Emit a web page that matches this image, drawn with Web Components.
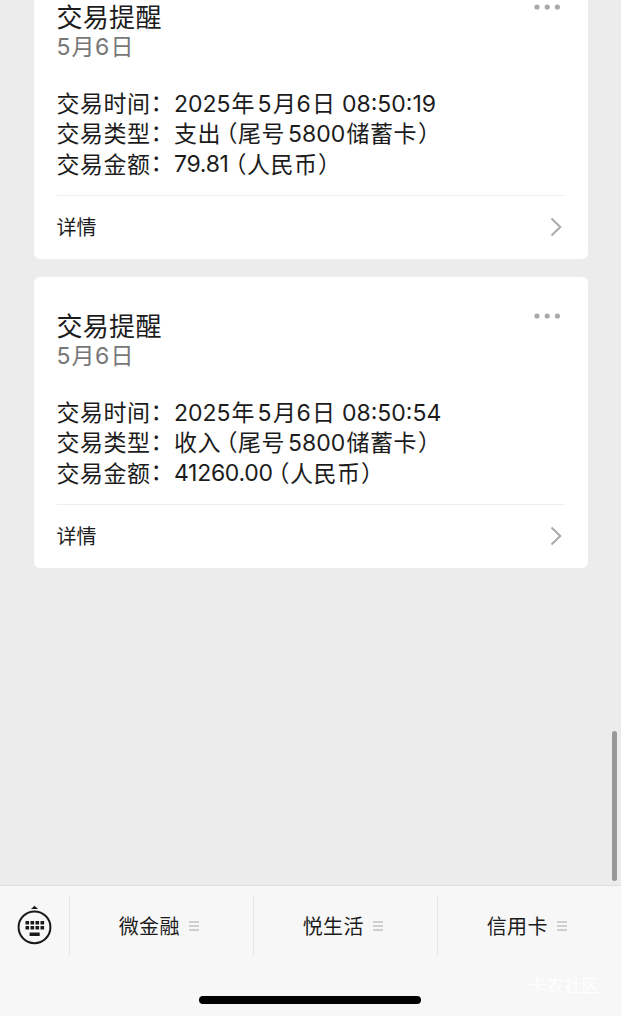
<!DOCTYPE html>
<html lang="zh-CN">
<head>
<meta charset="utf-8">
<title>交易提醒</title>
<style>
html,body{margin:0;height:100%;overflow:hidden}
body{background:#ececec;color:#1c1c1c;font-family:Inter,"Noto Sans CJK SC",sans-serif}
</style>
</head>
<body>
<chat-page></chat-page>
<script>
const define = (name, html, setup) => customElements.define(name, class extends HTMLElement {
  constructor() {
    super();
    const t = document.createElement('template');
    t.innerHTML = html;
    this.attachShadow({mode: 'open'}).append(t.content.cloneNode(true));
  }
  connectedCallback() { if (setup) setup(this, this.shadowRoot); }
});

define('text-run', `<style>
:host{display:block;flex:none;box-sizing:border-box;white-space:pre}
:host([tight]){letter-spacing:-.3px}
:host([cjk]){font-family:"Noto Sans CJK SC",sans-serif;letter-spacing:.5px;margin-top:-1.5px}
:host([paren]){font-feature-settings:"halt";letter-spacing:0}
:host([open]){padding-left:5px}
:host([colon]){margin-top:-3px}
</style><slot></slot>`, el => { el.style.width = el.getAttribute('w') + 'px'; });

define('info-line', `<style>
:host{display:flex;height:30.25px;line-height:30.25px;font-size:23px;white-space:nowrap}
</style><slot></slot>`);

define('more-dots', `<style>:host{display:block;width:26px;height:6px}svg{display:block}</style>
<svg width="26" height="6" fill="#a9a9a9"><circle cx="3" cy="3" r="2.6"/><circle cx="13.2" cy="3" r="2.6"/><circle cx="23.4" cy="3" r="2.6"/></svg>`);

define('notice-card', `<style>
:host{display:flex;flex-direction:column;box-sizing:border-box;height:291.5px;padding:32px 23px 0 23px;background:#fff;border-radius:6px}
header{display:flex;justify-content:space-between;height:32px}
h2{margin:0;font:400 26px/31px "Noto Sans CJK SC",sans-serif;letter-spacing:.3px}
more-dots{margin:4.5px 4.5px 0 0}
.date{display:flex;height:30px;line-height:30px;font-size:23px;color:#777}
.lines{margin-top:27px;height:91px}
footer{display:flex;align-items:center;justify-content:space-between;height:62px;margin-top:15px;border-top:1px solid #eee;font:400 20px/30px "Noto Sans CJK SC",sans-serif}
svg{display:block;margin-right:3px}
</style>
<header><h2>交易提醒</h2><more-dots></more-dots></header>
<div class="date"><text-run w="15">5</text-run><text-run cjk w="23.5">月</text-run><text-run w="15.5">6</text-run><text-run cjk w="24">日</text-run></div>
<div class="lines"><slot></slot></div>
<footer><span>详情</span><svg width="12" height="20" fill="none" stroke="#aaa" stroke-width="2"><path d="M1.5 1.5 10.3 10 1.5 18.5"/></svg></footer>`);

define('menu-item', `<style>
:host{display:flex;align-items:center;justify-content:center;gap:9.5px;box-sizing:border-box;width:184px;height:60px;padding-right:5px;border-left:1px solid #e7e7e7;font:400 20px/30px "Noto Sans CJK SC",sans-serif;letter-spacing:.4px}
svg{display:block}
</style><span><slot></slot></span>
<svg width="10" height="10" stroke="#c2c2c2" stroke-width="1.3"><path d="M0 1h10M0 5h10M0 9h10"/></svg>`);

define('keyboard-button', `<style>:host{display:flex;justify-content:center;box-sizing:border-box;width:69px;height:60px;padding-right:1px}svg{display:block}</style>
<svg width="36" height="60" viewBox="0 0 36 60"><path d="M15 12.9 18.5 9.8l3.5 3.1z" fill="#1a1a1a"/><circle cx="18.5" cy="31.3" r="15.9" fill="none" stroke="#1a1a1a" stroke-width="2"/>
<path fill="#1a1a1a" d="M9.5 25h3.6v3.6H9.5zm5 0h3.6v3.6h-3.6zm5 0h3.6v3.6h-3.6zm5 0h3.6v3.6h-3.6zM9.5 30h3.6v3.6H9.5zm5 0h3.6v3.6h-3.6zm5 0h3.6v3.6h-3.6zm5 0h3.6v3.6h-3.6zM13.6 36.5h10.1v3.5H13.6z"/></svg>`);

define('menu-bar', `<style>
:host{display:flex;flex-direction:column;position:relative;box-sizing:border-box;height:131px;background:#f7f7f7;border-top:1px solid #dedede;overflow:hidden}
nav{display:flex;margin-top:10px}
.home{width:222px;height:8px;border-radius:4px;background:#000;margin:40px 0 0 199px}
.mark{position:absolute;left:529px;top:86px;font:400 17.5px/26px "Noto Sans CJK SC",sans-serif;color:#fff}
</style>
<nav><keyboard-button></keyboard-button><menu-item>微金融</menu-item><menu-item>悦生活</menu-item><menu-item>信用卡</menu-item></nav>
<div class="home"></div><div class="mark">卡农社区</div>`);

define('chat-page', `<style>
:host{display:flex;flex-direction:column;height:1016px;position:relative;overflow:hidden}
main{flex:1;min-height:0;display:flex;flex-direction:column;gap:17.5px;padding:0 33.5px;overflow:hidden}
notice-card{flex:none}
notice-card:first-child{margin-top:-32.5px}
.thumb{position:absolute;left:612px;top:731px;width:5px;height:150px;border-radius:3px;background:#999}
menu-bar{flex:none}
</style>
<main>
<notice-card>
<info-line><text-run cjk w="94">交易时间</text-run><text-run cjk colon w="23.5">：</text-run><text-run w="57.5">2025</text-run><text-run cjk w="26">年</text-run><text-run w="15.5">5</text-run><text-run cjk w="23.5">月</text-run><text-run w="15.5">6</text-run><text-run cjk w="30">日</text-run><text-run w="98">08:50:19</text-run></info-line>
<info-line><text-run cjk w="94">交易类型</text-run><text-run cjk colon w="23.5">：</text-run><text-run cjk w="47">支出</text-run><text-run cjk paren open w="17">（</text-run><text-run cjk w="50">尾号</text-run><text-run w="58.5">5800</text-run><text-run cjk w="71.5">储蓄卡</text-run><text-run cjk paren w="12">）</text-run></info-line>
<info-line><text-run cjk w="94">交易金额</text-run><text-run cjk colon w="23.5">：</text-run><text-run tight w="56">79.81</text-run><text-run cjk paren open w="17">（</text-run><text-run cjk w="71">人民币</text-run><text-run cjk paren w="12">）</text-run></info-line>
</notice-card>
<notice-card>
<info-line><text-run cjk w="94">交易时间</text-run><text-run cjk colon w="23.5">：</text-run><text-run w="57.5">2025</text-run><text-run cjk w="26">年</text-run><text-run w="15.5">5</text-run><text-run cjk w="23.5">月</text-run><text-run w="15.5">6</text-run><text-run cjk w="30">日</text-run><text-run w="102">08:50:54</text-run></info-line>
<info-line><text-run cjk w="94">交易类型</text-run><text-run cjk colon w="23.5">：</text-run><text-run cjk w="47">收入</text-run><text-run cjk paren open w="17">（</text-run><text-run cjk w="50">尾号</text-run><text-run w="58.5">5800</text-run><text-run cjk w="71.5">储蓄卡</text-run><text-run cjk paren w="12">）</text-run></info-line>
<info-line><text-run cjk w="94">交易金额</text-run><text-run cjk colon w="23.5">：</text-run><text-run tight w="99">41260.00</text-run><text-run cjk paren open w="17">（</text-run><text-run cjk w="71">人民币</text-run><text-run cjk paren w="12">）</text-run></info-line>
</notice-card>
</main>
<menu-bar></menu-bar>
<div class="thumb"></div>`);
</script>
</body>
</html>
